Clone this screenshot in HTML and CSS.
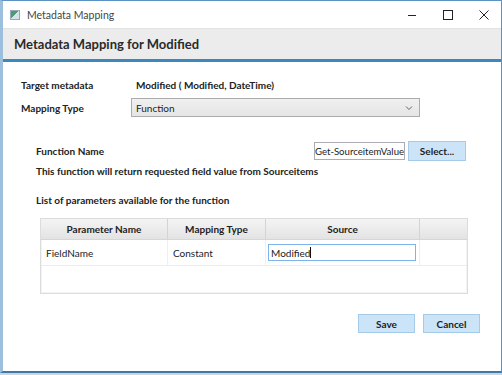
FILE: index.html
```html
<!DOCTYPE html>
<html lang="en">
<head>
    <meta charset="UTF-8">
    <title>Metadata Mapping</title>
    <link rel="stylesheet" href="styles.css">
</head>
<body>
    <div class="window">
        <div class="titlebar">
            <span class="app-icon"></span>
            <span class="title">Metadata Mapping</span>
            <div class="controls">
                <svg width="12" height="12" viewBox="0 0 12 12"><path d="M2 6.5h8" stroke="#222" stroke-width="1"/></svg>
                <svg width="12" height="12" viewBox="0 0 12 12"><rect x="1.5" y="1.5" width="9" height="9" fill="none" stroke="#222" stroke-width="1"/></svg>
                <svg width="12" height="12" viewBox="0 0 12 12"><path d="M1.5 1.5l9 9M10.5 1.5l-9 9" stroke="#222" stroke-width="1"/></svg>
            </div>
        </div>

        <div class="header">Metadata Mapping for Modified</div>

        <div class="content">
            <div class="row">
                <span class="label">Target metadata</span>
                <span class="value">Modified ( Modified, DateTime)</span>
            </div>
            <div class="row">
                <span class="label">Mapping Type</span>
                <div class="combo">
                    <span>Function</span>
                    <svg width="8" height="6" viewBox="0 0 8 6"><path d="M1 1.5l3 3 3-3" fill="none" stroke="#666" stroke-width="1"/></svg>
                </div>
            </div>

            <div class="function">
                <div class="fn-row">
                    <span class="label">Function Name</span>
                    <span class="textbox">Get-SourceitemValue</span>
                    <button class="btn select">Select...</button>
                </div>
                <p class="note">This function will return requested field value from Sourceitems</p>
                <p class="note list">List of parameters available for the function</p>

                <div class="grid">
                    <div class="grid-head">
                        <span class="c1">Parameter Name</span>
                        <span class="c2">Mapping Type</span>
                        <span class="c3">Source</span>
                        <span class="c4"></span>
                    </div>
                    <div class="grid-row">
                        <span class="c1">FieldName</span>
                        <span class="c2">Constant</span>
                        <span class="c3"><span class="source-input">Modified<i class="caret"></i></span></span>
                        <span class="c4"></span>
                    </div>
                </div>
            </div>

            <div class="actions">
                <button class="btn">Save</button>
                <button class="btn">Cancel</button>
            </div>
        </div>
    </div>
</body>
</html>
```

FILE: styles.css
```css
body {
    margin: 0;
    background: #c8d6e2;
    font-family: 'Lato', 'Open Sans', sans-serif;
    font-size: 10px;
    color: #222;
}
.window {
    width: 502px;
    height: 373px;
    box-sizing: border-box;
    background: white;
    border: 1px solid #5b93c4;
    border-left: 3px solid #9cbfde;
    border-bottom: 2px solid #3f79a8;
    display: flex;
    flex-direction: column;
}
.titlebar {
    height: 27px;
    display: flex;
    align-items: center;
    padding-left: 7px;
    border-bottom: 1px solid #e2e2e2;
}
.app-icon {
    width: 8px;
    height: 8px;
    border: 1px solid #9aa8b4;
    background: linear-gradient(135deg, #4b9a7a 0 50%, #d9e2ea 50%);
    margin-right: 7px;
}
.title {
    color: #444;
    font-size: 10.5px;
}
.controls {
    margin-left: auto;
    display: flex;
    gap: 24px;
    padding-right: 11px;
}
.header {
    height: 30px;
    background: #ececec;
    border-bottom: 3px solid #3c88bd;
    display: flex;
    align-items: center;
    padding-left: 11px;
    font-size: 13px;
    font-weight: bold;
    color: #2a2a2a;
}
.content {
    padding: 14px 16px 0 18px;
    flex: 1;
}
.row {
    display: flex;
    align-items: center;
    height: 18px;
    margin-bottom: 4px;
}
.row + .row {
    height: 19px;
}
.label {
    font-weight: bold;
    width: 110px;
    flex-shrink: 0;
}
.value {
    font-weight: bold;
    padding-left: 5px;
}
.combo {
    width: 289px;
    height: 19px;
    box-sizing: border-box;
    border: 1px solid #acacac;
    background: linear-gradient(#f0f0f0, #e5e5e5);
    display: flex;
    align-items: center;
    justify-content: space-between;
    padding: 0 6px 0 4px;
}
.function {
    padding-left: 15px;
    margin-top: 24px;
}
.fn-row {
    display: flex;
    align-items: center;
    height: 20px;
}
.fn-row .label {
    width: auto;
}
.textbox {
    margin-left: auto;
    width: 91px;
    height: 18px;
    box-sizing: border-box;
    border: 1px solid #abadb3;
    font-size: 9.6px;
    white-space: nowrap;
    overflow: hidden;
    display: flex;
    align-items: center;
    justify-content: center;
    color: #222;
}
.btn {
    height: 20px;
    width: 58px;
    box-sizing: border-box;
    background: #cce4f7;
    border: 1px solid #a6cbe8;
    font-family: inherit;
    font-size: 10px;
    font-weight: bold;
    color: #222;
}
.select {
    margin-left: 3px;
    margin-right: 19px;
}
.note {
    margin: 3px 0 0;
    font-weight: bold;
    line-height: 14px;
}
.list {
    margin-top: 15px;
}
.grid {
    margin: 11px 17px 0 4px;
    height: 76px;
    box-sizing: border-box;
    border: 1px solid #dcdcdc;
    box-shadow: inset 0 0 0 1px #f4f4f4;
}
.grid-head, .grid-row {
    display: grid;
    grid-template-columns: 127px 98px 154px 1fr;
}
.grid-head {
    height: 20px;
    background: linear-gradient(#f4f4f4, #e3e3e3);
    border-bottom: 1px solid #d6d6d6;
}
.grid-head span {
    font-weight: bold;
    text-align: center;
    line-height: 20px;
    border-right: 1px solid #d4d4d4;
}
.grid-head .c4 {
    border-right: none;
}
.grid-row {
    height: 25px;
    border-bottom: 1px solid #ececec;
}
.grid-row > span {
    display: flex;
    align-items: center;
    padding-left: 5px;
    border-right: 1px solid #f0f0f0;
}
.grid-row .c3 {
    padding-left: 2px;
}
.grid-row .c4 {
    border-right: none;
}
.source-input {
    width: 148px;
    height: 17px;
    box-sizing: border-box;
    border: 1px solid #7eb4ea;
    display: flex;
    align-items: center;
    padding-left: 2px;
}
.caret {
    width: 1px;
    height: 11px;
    background: #111;
}
.actions {
    display: flex;
    justify-content: flex-end;
    gap: 8px;
    margin-top: 20px;
    padding-right: 5px;
}
.actions .btn {
    width: 57px;
    height: 19px;
}
```
